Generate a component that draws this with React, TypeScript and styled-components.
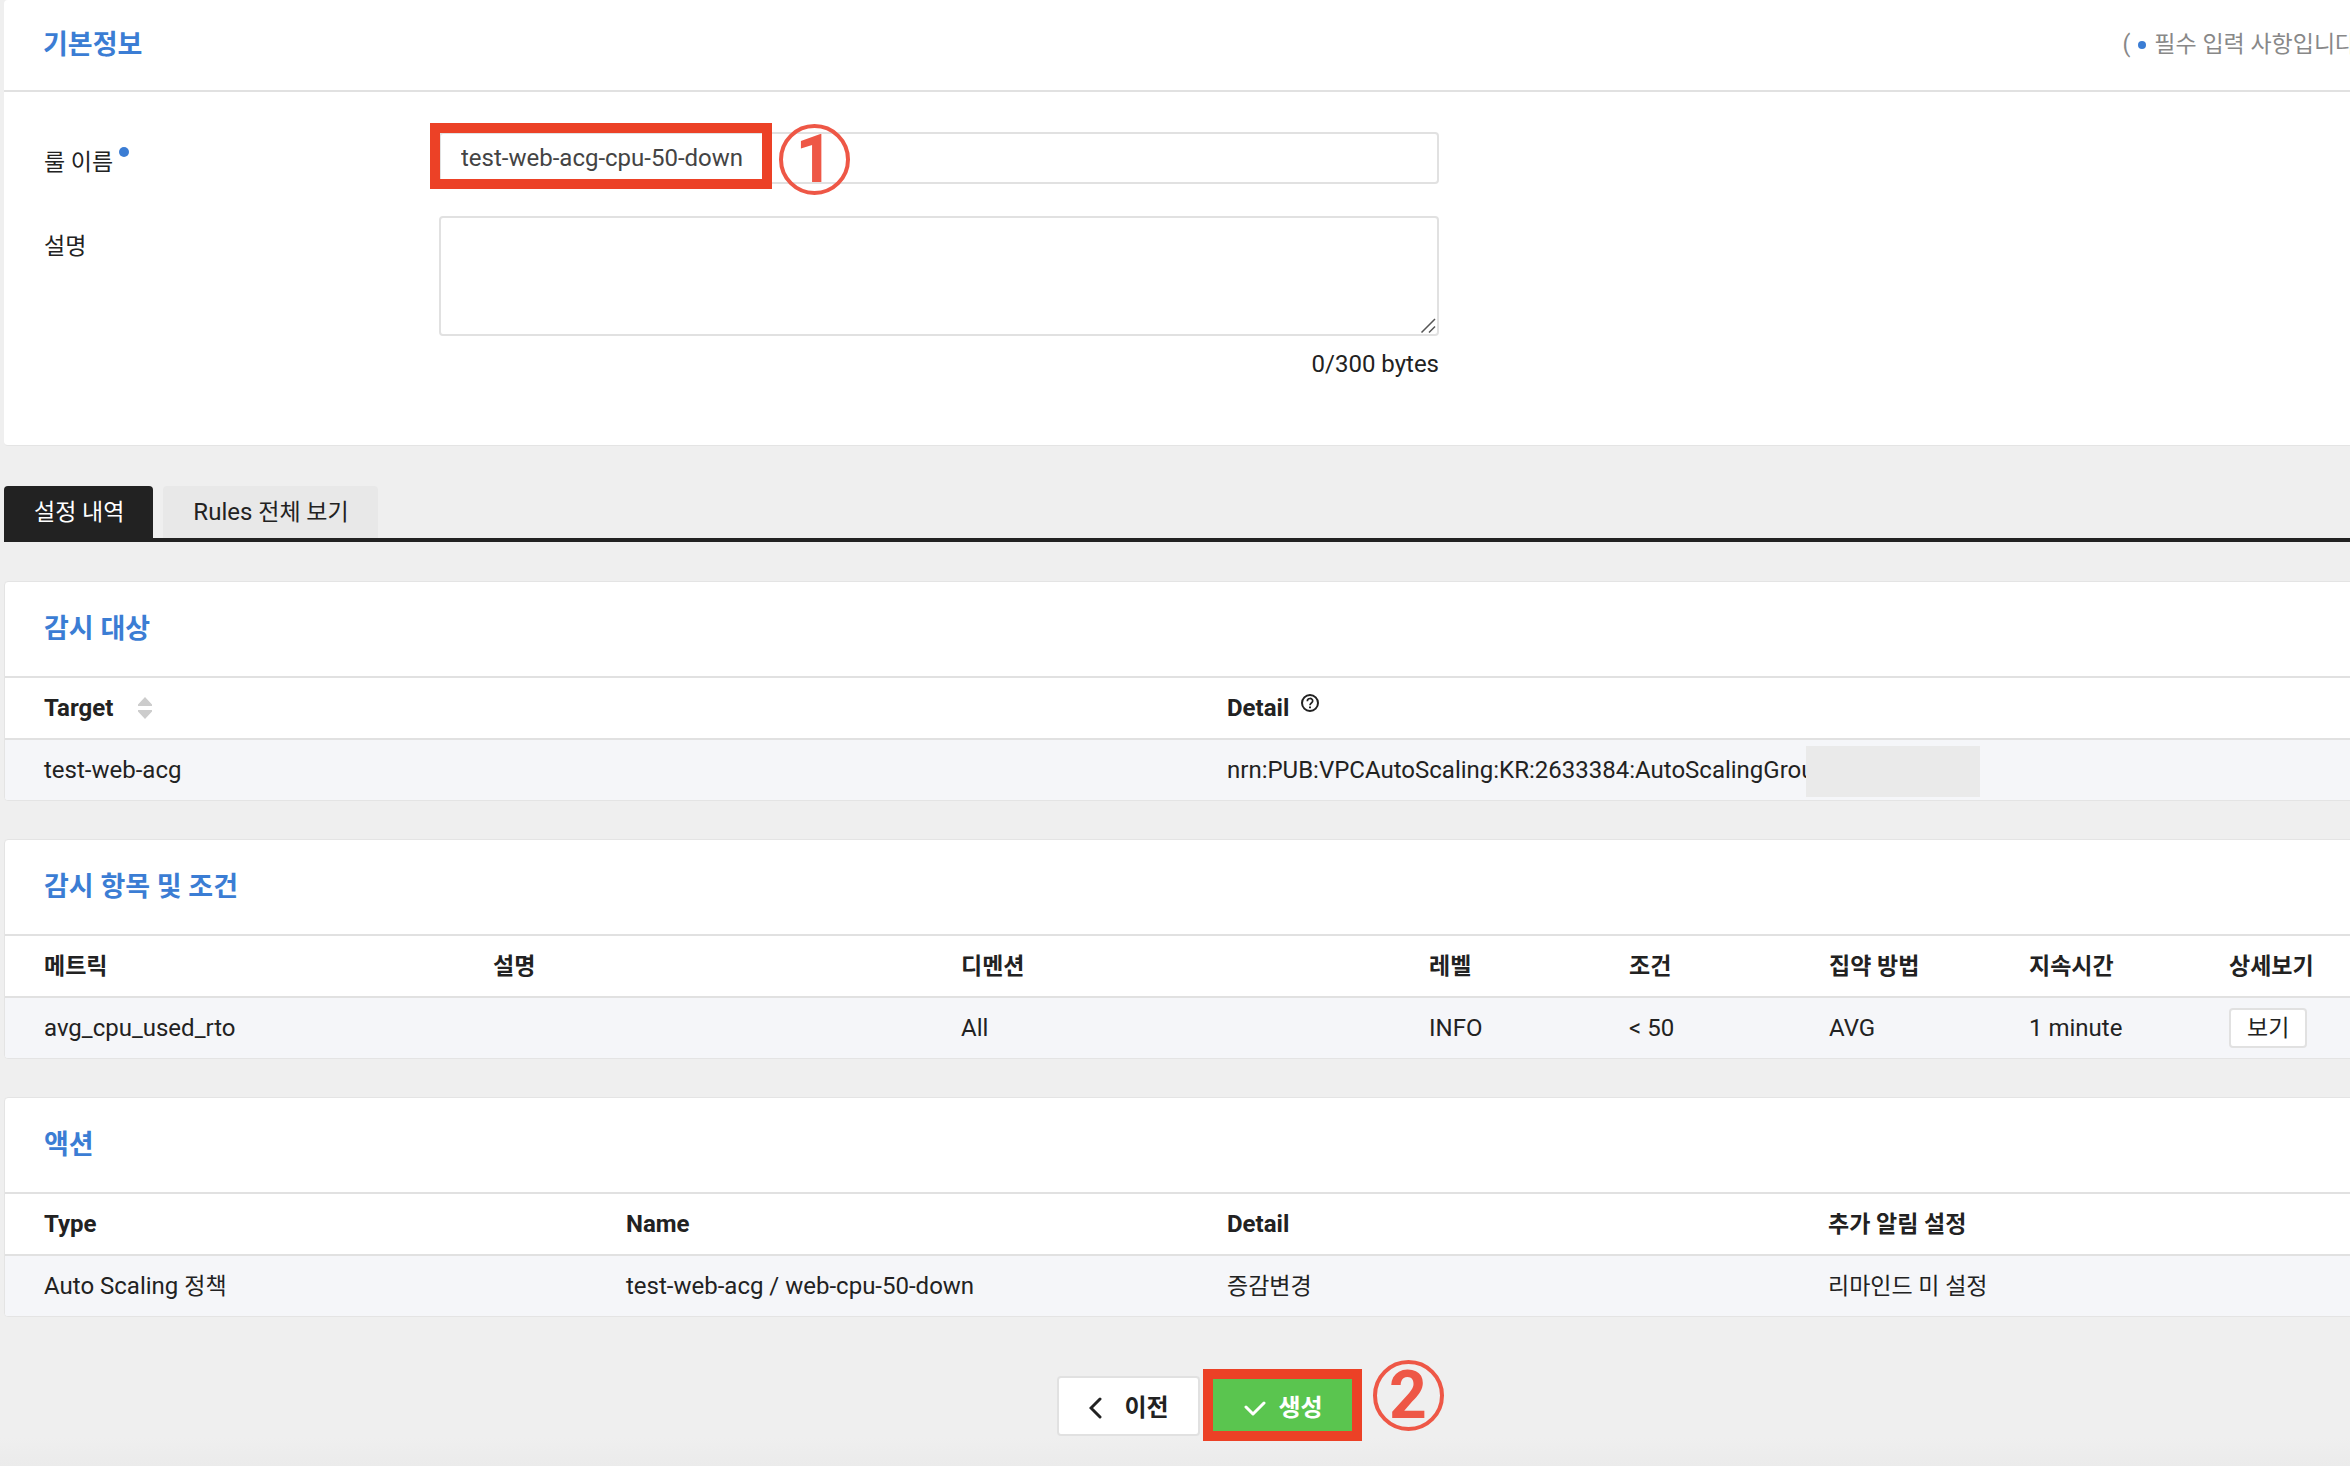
import React from "react";
import styled, { createGlobalStyle } from "styled-components";

const line = "#e1e1e1";
const ink = "#222222";
const blue = "#3b7dd4";
const red = "#ec4126";
const mark = "#ee5746";

const GlobalStyle = createGlobalStyle`
  *, *::before, *::after { box-sizing: border-box; }
  body {
    margin: 0;
    background: #efefef;
    color: ${ink};
    font-family: Roboto, "Noto Sans CJK KR", sans-serif;
    font-size: 24px;
    line-height: 32px;
  }
  button, input, textarea { font: inherit; color: inherit; }
`;

const Viewport = styled.div`
  overflow: hidden;
  min-height: 100vh;
  background: linear-gradient(to top, #ebebeb, #efefef 28px);
`;

/* The console canvas is wider than the window and runs on past its right edge. */
const Page = styled.main`
  margin: 0 -60px 0 4px;
`;

const Ko = styled.span`
  font-size: 23px;
`;

const Panel = styled.section`
  background: #fff;
  border: 1px solid #e4e4e4;
  border-radius: 4px;
  overflow: hidden;
  margin-bottom: 38px;
`;

const InfoPanel = styled(Panel)`
  border-width: 0 0 1px;
  margin-bottom: 40px;
  padding-bottom: 65px;
`;

const PanelHead = styled.header<{ $tall?: boolean }>`
  display: flex;
  align-items: center;
  justify-content: space-between;
  height: ${(p) => (p.$tall ? 96 : 92)}px;
  padding: 0 34px 0 39px;
  border-bottom: 2px solid ${line};
`;

const Title = styled.h2`
  margin: 0;
  font-size: 27px;
  font-weight: 700;
  color: ${blue};
`;

const Note = styled.p`
  display: flex;
  align-items: center;
  gap: 8px;
  margin: 0;
  font-size: 23px;
  color: #888;
`;

const Dot = styled.span<{ $size: number }>`
  width: ${(p) => p.$size}px;
  height: ${(p) => p.$size}px;
  border-radius: 50%;
  background: ${blue};
`;

const Form = styled.form`
  display: grid;
  grid-template-columns: 395px 1000px;
  row-gap: 32px;
  padding: 40px 0 0 40px;
`;

const Label = styled.label`
  display: flex;
  align-items: flex-start;
  gap: 6px;
  padding-top: 15px;
  font-size: 23px;
`;

const Field = styled.div`
  position: relative;
  display: flex;
  flex-direction: column;
`;

const TextInput = styled.input`
  height: 52px;
  padding: 0 20px;
  border: 2px solid ${line};
  border-radius: 4px;
  background: #fff;
  color: #444;
`;

const TextBox = styled.div`
  position: relative;
  display: flex;
`;

const TextArea = styled.textarea`
  flex: 1;
  height: 120px;
  padding: 12px 20px;
  border: 2px solid ${line};
  border-radius: 4px;
  background: #fff;
  resize: none;
`;

const Grip = styled.svg`
  position: absolute;
  right: 3px;
  bottom: 3px;
`;

const Counter = styled.p`
  margin: 12px 0 0;
  text-align: right;
`;

const Tabs = styled.nav`
  display: flex;
  gap: 10px;
  margin-bottom: 39px;
  border-bottom: 4px solid ${ink};
`;

const Tab = styled.button<{ $active?: boolean }>`
  height: 52px;
  padding: 0 29px 0 30px;
  border: 0;
  border-radius: 4px 4px 0 0;
  background: ${(p) => (p.$active ? ink : "#e8e8e8")};
  color: ${(p) => (p.$active ? "#fff" : ink)};
`;

const Table = styled.table`
  width: 100%;
  table-layout: fixed;
  border-collapse: separate;
  border-spacing: 0;
`;

const Th = styled.th<{ $width?: number }>`
  width: ${(p) => (p.$width ? `${p.$width}px` : "auto")};
  height: 62px;
  padding: 0 0 0 20px;
  border-bottom: 2px solid ${line};
  text-align: left;
  font-weight: 700;
  white-space: nowrap;
  &:first-child { padding-left: 39px; }
`;

const Td = styled.td`
  position: relative;
  height: 60px;
  padding: 0 0 0 20px;
  background: #f5f6f9;
  white-space: nowrap;
  &:first-child { padding-left: 39px; }
`;

const HeadCell = styled.span<{ $gap: number }>`
  display: flex;
  align-items: center;
  gap: ${(p) => p.$gap}px;
`;

const HelpIcon = styled.svg`
  display: block;
  margin-bottom: 10px;
`;

const Redacted = styled.span`
  position: absolute;
  top: 6px;
  left: 599px;
  width: 174px;
  height: 51px;
  background: #eaeaea;
`;

const SmallButton = styled.button`
  display: block;
  height: 40px;
  padding: 2px 16px 0;
  border: 2px solid ${line};
  border-radius: 4px;
  background: #fff;
  line-height: 32px;
  font-size: 23px;
`;

const Actions = styled.div`
  display: flex;
  justify-content: center;
  gap: 8px;
  padding-top: 21px;
`;

const ActionSlot = styled.div`
  position: relative;
`;

const ActionButton = styled.button<{ $primary?: boolean }>`
  display: flex;
  align-items: center;
  justify-content: center;
  gap: ${(p) => (p.$primary ? 12 : 22)}px;
  width: ${(p) => (p.$primary ? 150 : 143)}px;
  height: 60px;
  padding: 3px 0 0 2px;
  border: 2px solid ${(p) => (p.$primary ? "#5ac54f" : line)};
  border-radius: 4px;
  background: ${(p) => (p.$primary ? "#5ac54f" : "#fff")};
  color: ${(p) => (p.$primary ? "#fff" : ink)};
  font-weight: 700;
`;

const Highlight = styled.span<{ $x: number; $y: number; $w: number; $h: number }>`
  position: absolute;
  left: ${(p) => p.$x}px;
  top: ${(p) => p.$y}px;
  width: ${(p) => p.$w}px;
  height: ${(p) => p.$h}px;
  border: 10px solid ${red};
  pointer-events: none;
`;

const Step = styled.span<{ $x: number; $y: number }>`
  position: absolute;
  left: ${(p) => p.$x}px;
  top: ${(p) => p.$y}px;
  display: flex;
  align-items: center;
  justify-content: center;
  width: 71px;
  height: 71px;
  border: 4px solid ${mark};
  border-radius: 50%;
  color: ${mark};
  font: 700 66px/64px Roboto, sans-serif;
  pointer-events: none;
`;

const metricColumns: { name: string; width?: number }[] = [
  { name: "메트릭" },
  { name: "설명" },
  { name: "디멘션" },
  { name: "레벨", width: 200 },
  { name: "조건", width: 200 },
  { name: "집약 방법", width: 200 },
  { name: "지속시간", width: 200 },
  { name: "상세보기", width: 200 },
];

export default function App() {
  return (
    <Viewport>
      <GlobalStyle />
      <Page>
        <InfoPanel>
          <PanelHead>
            <Title>기본정보</Title>
            <Note>
              <span>(</span>
              <Dot $size={8} />
              <span>필수 입력 사항입니다. )</span>
            </Note>
          </PanelHead>
          <Form onSubmit={(e) => e.preventDefault()}>
            <Label htmlFor="rule-name">
              룰 이름 <Dot $size={10} />
            </Label>
            <Field>
              <TextInput id="rule-name" defaultValue="test-web-acg-cpu-50-down" />
              <Highlight $x={-9} $y={-9} $w={342} $h={66} />
              <Step $x={340} $y={-8}>1</Step>
            </Field>
            <Label htmlFor="rule-desc">설명</Label>
            <Field>
              <TextBox>
                <TextArea id="rule-desc" />
                <Grip width="16" height="16" viewBox="0 0 16 16" stroke="#555" strokeWidth="1.500">
                  <path d="M1.500 15.500 15 2M9 15.500 15 9.500" />
                </Grip>
              </TextBox>
              <Counter>0/300 bytes</Counter>
            </Field>
          </Form>
        </InfoPanel>

        <Tabs>
          <Tab type="button" $active><Ko>설정 내역</Ko></Tab>
          <Tab type="button">Rules <Ko>전체 보기</Ko></Tab>
        </Tabs>

        <Panel>
          <PanelHead $tall><Title>감시 대상</Title></PanelHead>
          <Table>
            <thead>
              <tr>
                <Th>
                  <HeadCell $gap={25}>
                    Target
                    <svg width="14" height="22" viewBox="0 0 14 22" fill="#ccc">
                      <path d="M7 0 14 7.500V9H0V7.500Z M7 22 14 14.500V13H0V14.500Z" />
                    </svg>
                  </HeadCell>
                </Th>
                <Th>
                  <HeadCell $gap={11}>
                    Detail
                    <HelpIcon width="20" height="20" viewBox="0 0 20 20" fill="none" stroke={ink} strokeWidth="2">
                      <circle cx="10" cy="10" r="8" />
                      <path d="M7.300 8.200C7.300 4.600 12.700 4.600 12.700 8C12.700 10 10 10 10 12.200" strokeWidth="1.700" />
                      <path d="M10 13.400V15.200" />
                    </HelpIcon>
                  </HeadCell>
                </Th>
              </tr>
            </thead>
            <tbody>
              <tr>
                <Td>test-web-acg</Td>
                <Td>
                  nrn:PUB:VPCAutoScaling:KR:2633384:AutoScalingGroup
                  <Redacted />
                </Td>
              </tr>
            </tbody>
          </Table>
        </Panel>

        <Panel>
          <PanelHead $tall><Title>감시 항목 및 조건</Title></PanelHead>
          <Table>
            <thead>
              <tr>
                {metricColumns.map((c) => (
                  <Th key={c.name} $width={c.width}><Ko>{c.name}</Ko></Th>
                ))}
              </tr>
            </thead>
            <tbody>
              <tr>
                <Td>avg_cpu_used_rto</Td>
                <Td />
                <Td>All</Td>
                <Td>INFO</Td>
                <Td>&lt; 50</Td>
                <Td>AVG</Td>
                <Td>1 minute</Td>
                <Td><SmallButton type="button">보기</SmallButton></Td>
              </tr>
            </tbody>
          </Table>
        </Panel>

        <Panel>
          <PanelHead $tall><Title>액션</Title></PanelHead>
          <Table>
            <thead>
              <tr>
                <Th>Type</Th>
                <Th>Name</Th>
                <Th>Detail</Th>
                <Th><Ko>추가 알림 설정</Ko></Th>
              </tr>
            </thead>
            <tbody>
              <tr>
                <Td>Auto Scaling <Ko>정책</Ko></Td>
                <Td>test-web-acg / web-cpu-50-down</Td>
                <Td><Ko>증감변경</Ko></Td>
                <Td><Ko>리마인드 미 설정</Ko></Td>
              </tr>
            </tbody>
          </Table>
        </Panel>

        <Actions>
          <ActionButton type="button">
            <svg width="13" height="22" viewBox="0 0 13 22" fill="none" stroke={ink} strokeWidth="3" strokeLinecap="round">
              <path d="M11 2 2 11 11 20" />
            </svg>
            이전
          </ActionButton>
          <ActionSlot>
            <ActionButton type="button" $primary>
              <svg width="22" height="16" viewBox="0 0 22 16" fill="none" stroke="#fff" strokeWidth="3" strokeLinecap="round" strokeLinejoin="round">
                <path d="M2 7 9 14 20 3" />
              </svg>
              생성
            </ActionButton>
            <Highlight $x={-5} $y={-7} $w={159} $h={72} />
            <Step $x={165} $y={-16}>2</Step>
          </ActionSlot>
        </Actions>
      </Page>
    </Viewport>
  );
}
